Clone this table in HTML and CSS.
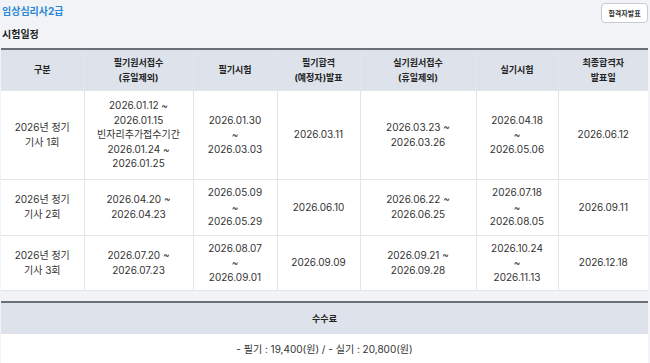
FILE: index.html
```html
<!DOCTYPE html>
<html lang="ko">
<head>
<meta charset="utf-8">
<link rel="stylesheet" href="styles.css">
</head>
<body>
<div class="page">
  <div class="topbar">
    <h1 class="title">임상심리사2급</h1>
    <button class="btn">합격자발표</button>
  </div>
  <h2 class="subtitle">시험일정</h2>
  <table class="sched">
    <colgroup>
      <col class="c1"><col class="c2"><col class="c3"><col class="c4"><col class="c5"><col class="c6"><col class="c7">
    </colgroup>
    <thead>
      <tr>
        <th>구분</th>
        <th>필기원서접수<br>(휴일제외)</th>
        <th>필기시험</th>
        <th>필기합격<br>(예정자)발표</th>
        <th>실기원서접수<br>(휴일제외)</th>
        <th>실기시험</th>
        <th>최종합격자<br>발표일</th>
      </tr>
    </thead>
    <tbody>
      <tr class="r1">
        <td>2026년 정기<br>기사 1회</td>
        <td>2026.01.12 ~<br>2026.01.15<br>빈자리추가접수기간<br>2026.01.24 ~<br>2026.01.25</td>
        <td>2026.01.30<br>~<br>2026.03.03</td>
        <td>2026.03.11</td>
        <td>2026.03.23 ~<br>2026.03.26</td>
        <td>2026.04.18<br>~<br>2026.05.06</td>
        <td>2026.06.12</td>
      </tr>
      <tr class="r2">
        <td>2026년 정기<br>기사 2회</td>
        <td>2026.04.20 ~<br>2026.04.23</td>
        <td>2026.05.09<br>~<br>2026.05.29</td>
        <td>2026.06.10</td>
        <td>2026.06.22 ~<br>2026.06.25</td>
        <td>2026.07.18<br>~<br>2026.08.05</td>
        <td>2026.09.11</td>
      </tr>
      <tr class="r3">
        <td>2026년 정기<br>기사 3회</td>
        <td>2026.07.20 ~<br>2026.07.23</td>
        <td>2026.08.07<br>~<br>2026.09.01</td>
        <td>2026.09.09</td>
        <td>2026.09.21 ~<br>2026.09.28</td>
        <td>2026.10.24<br>~<br>2026.11.13</td>
        <td>2026.12.18</td>
      </tr>
    </tbody>
  </table>
  <table class="fee">
    <thead><tr><th>수수료</th></tr></thead>
    <tbody><tr><td>- 필기 : 19,400(원) / - 실기 : 20,800(원)</td></tr></tbody>
  </table>
</div>
</body>
</html>
```
FILE: styles.css
```css
* { box-sizing: border-box; }
html, body { margin: 0; padding: 0; }
body {
  background: #f1f3f6;
  font-family: Inter, "Noto Sans CJK KR", sans-serif;
  color: #333;
}
.page { padding: 0 2px 0 1px; }
.topbar {
  display: flex;
  justify-content: space-between;
  align-items: flex-start;
  height: 26px;
  padding-top: 3px;
}
.title {
  margin: 0;
  padding-left: 1px;
  font-size: 10px;
  line-height: 17px;
  font-weight: 700;
  color: #2b87d6;
}
.btn {
  width: 47px;
  height: 20px;
  padding: 0;
  font-family: inherit;
  font-size: 7px;
  font-weight: 700;
  color: #333;
  background: #fff;
  border: 1px solid #c8cbd0;
  border-radius: 4px;
}
.subtitle {
  margin: 0;
  padding-left: 1px;
  font-size: 10px;
  line-height: 16px;
  font-weight: 700;
  color: #222;
  height: 22px;
}
table {
  width: 647px;
  border-collapse: collapse;
  table-layout: fixed;
  background: #fff;
}
.sched { border-top: 2px solid #6b6f76; }
.c1 { width: 83px; } .c2 { width: 109px; } .c3 { width: 84px; } .c4 { width: 83px; }
.c5 { width: 116px; } .c6 { width: 82px; } .c7 { width: 90px; }
th, td {
  border: 1px solid #e3e5e8;
  text-align: center;
  vertical-align: middle;
  padding: 2px 2px;
}
.sched th, .sched td { border-top: 0; }
th {
  background: #dee3eb;
  font-size: 9px;
  font-weight: 700;
  line-height: 15px;
  color: #222;
  height: 41px;
}
td {
  font-size: 10px;
  line-height: 14.6px;
  color: #333;
}
.sched tr > :first-child { border-left: 0; }
.sched tr > :last-child { border-right: 0; }
.r1 td { height: 89px; }
.r2 td { height: 56px; }
.r3 td { height: 55px; }
.fee {
  margin-top: 10px;
  border-top: 2px solid #6b6f76;
}
.fee th { height: 32px; border: 0; font-size: 9px; }
.fee td { height: 32px; border: 0; }
```
